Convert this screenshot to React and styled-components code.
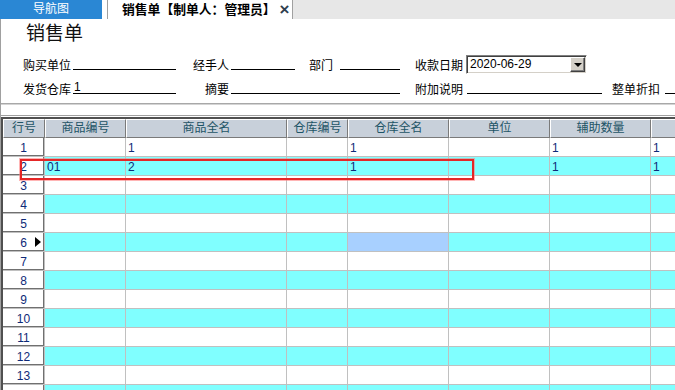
import React from "react";
import styled, { createGlobalStyle } from "styled-components";

const COLUMNS = [
  { title: "行号", width: 42 },
  { title: "商品编号", width: 81 },
  { title: "商品全名", width: 161 },
  { title: "仓库编号", width: 61 },
  { title: "仓库全名", width: 101 },
  { title: "单位", width: 101 },
  { title: "辅助数量", width: 101 },
  { title: "", width: 100 },
];

const ROWS = [
  ["", "1", "", "1", "", "1", "1"],
  ["01", "2", "", "1", "", "1", "1"],
];

const ROW_COUNT = 14;

function App() {
  const rows = [];
  for (let i = 0; i < ROW_COUNT; i++) {
    rows.push(ROWS[i] || ["", "", "", "", "", "", ""]);
  }

  return (
    <Page>
      <GlobalStyle />
      <TabBar>
        <NavTab>导航图</NavTab>
        <TabGap />
        <ActiveTab>
          销售单【制单人：管理员】
          <Close>×</Close>
        </ActiveTab>
        <TabFill />
      </TabBar>

      <Body>
        <Title>销售单</Title>

        <FormRow>
          <Field>
            <Label $w={50}>购买单位</Label>
            <Line $ml={2} $w={103} />
          </Field>
          <Field $ml={16}>
            <Label $w={37}>经手人</Label>
            <Line $ml={2} $w={64} />
          </Field>
          <Field $ml={14}>
            <Label $w={24}>部门</Label>
            <Line $ml={7} $w={60} />
          </Field>
          <Field $ml={15}>
            <Label $w={48}>收款日期</Label>
            <DateBox>
              2020-06-29
              <DropButton>
                <Caret />
              </DropButton>
            </DateBox>
          </Field>
        </FormRow>

        <FormRow $mt={4}>
          <Field>
            <Label $w={50}>发货仓库</Label>
            <Line $ml={2} $w={103}>1</Line>
          </Field>
          <Field>
            <Label $w={53}>摘要</Label>
            <Line $ml={2} $w={169} />
          </Field>
          <Field $ml={15}>
            <Label $w={48}>附加说明</Label>
            <Line $ml={4} $w={135} />
          </Field>
          <Field $ml={10}>
            <Label $w={48}>整单折扣</Label>
            <Line $ml={5} $w={40} />
          </Field>
        </FormRow>

        <Divider />

        <GridWrap>
          <Grid>
            {COLUMNS.map((col, i) => (
              <HeaderCell key={"h" + i}>{col.title}</HeaderCell>
            ))}
            {rows.map((row, r) => (
              <React.Fragment key={r}>
                <RowNum>
                  {r + 1}
                  {r === 5 && <Pointer />}
                </RowNum>
                {row.map((value, c) => (
                  <Cell
                    key={c}
                    $alt={r % 2 === 1}
                    $selected={r === 5 && c === 3}
                  >
                    {value}
                  </Cell>
                ))}
              </React.Fragment>
            ))}
          </Grid>
          <Highlight />
        </GridWrap>
      </Body>
    </Page>
  );
}

export default App;

const GlobalStyle = createGlobalStyle`
  html, body {
    margin: 0;
    padding: 0;
    background: #fff;
    overflow: hidden;
  }
  body {
    font-family: "Liberation Sans", "Noto Sans CJK SC", sans-serif;
    font-size: 12px;
    color: #000;
  }
`;

const Page = styled.div`
  width: 675px;
  height: 390px;
  overflow: hidden;
  display: flex;
  flex-direction: column;
`;

const TabBar = styled.div`
  display: flex;
  height: 19px;
  flex-shrink: 0;
`;

const NavTab = styled.div`
  width: 102px;
  background: #2a87d4;
  color: #fff;
  font-size: 12px;
  line-height: 19px;
  text-align: center;
`;

const TabGap = styled.div`
  width: 5px;
  background: #fff;
`;

const ActiveTab = styled.div`
  box-sizing: border-box;
  width: 186px;
  border-left: 1px solid #a0a0a0;
  border-right: 1px solid #a0a0a0;
  padding-left: 14px;
  font-size: 12.8px;
  font-weight: bold;
  line-height: 19px;
  white-space: nowrap;
  display: flex;
  align-items: center;
`;

const Close = styled.span`
  margin-left: 4px;
  font-size: 17px;
  font-weight: bold;
  line-height: 17px;
  color: #2f3e4e;
`;

const TabFill = styled.div`
  flex: 1;
  background: #e7e7e7;
`;

const Body = styled.div`
  flex: 1;
  border-left: 1px solid #a0a0a0;
  display: flex;
  flex-direction: column;
  min-height: 0;
`;

const Title = styled.div`
  flex-shrink: 0;
  margin-top: 2px;
  padding-left: 25px;
  height: 26px;
  font-size: 19px;
  line-height: 26px;
  color: #111;
`;

const FormRow = styled.div`
  flex-shrink: 0;
  display: flex;
  align-items: center;
  height: 20px;
  margin-top: ${(p) => p.$mt ?? 7}px;
  padding-left: 20px;
  white-space: nowrap;
`;

const Field = styled.div`
  display: flex;
  align-items: center;
  flex-shrink: 0;
  margin-left: ${(p) => p.$ml || 0}px;
`;

const Label = styled.span`
  width: ${(p) => p.$w}px;
  text-align: right;
  font-size: 12px;
  flex-shrink: 0;
`;

const Line = styled.span`
  box-sizing: border-box;
  width: ${(p) => p.$w}px;
  height: 12px;
  margin-left: ${(p) => p.$ml || 0}px;
  border-bottom: 1px solid #000;
  font-size: 12px;
  line-height: 11px;
  padding-left: 1px;
  flex-shrink: 0;
`;

const DateBox = styled.div`
  box-sizing: border-box;
  position: relative;
  width: 121px;
  height: 19px;
  margin-left: 3px;
  border: 1px solid;
  border-color: #808080 #fff #fff #808080;
  box-shadow: inset 1px 1px 0 #404040, inset -1px -1px 0 #d4d0c8;
  padding-left: 3px;
  font-size: 12px;
  line-height: 17px;
  display: flex;
  align-items: center;
`;

const DropButton = styled.div`
  box-sizing: border-box;
  position: absolute;
  right: 1px;
  top: 1px;
  width: 15px;
  height: 15px;
  background: #d4d0c8;
  border: 1px solid;
  border-color: #fff #404040 #404040 #fff;
  box-shadow: inset -1px -1px 0 #808080;
  display: flex;
  align-items: center;
  justify-content: center;
`;

const Caret = styled.span`
  width: 0;
  height: 0;
  border-left: 4px solid transparent;
  border-right: 4px solid transparent;
  border-top: 4px solid #000;
  margin-top: 1px;
`;

const Divider = styled.div`
  flex-shrink: 0;
  margin-top: 5px;
  height: 1px;
  border-top: 1px solid #a8a8a8;
  background: #d4d4d4;
`;

const GridWrap = styled.div`
  position: relative;
  margin-top: 10px;
  border-top: 1px solid #a0a0a0;
  padding-top: 1px;
  flex-shrink: 0;
`;

const Grid = styled.div`
  display: grid;
  grid-template-columns: ${COLUMNS.map((c) => c.width + "px").join(" ")};
  grid-auto-rows: 19px;
  border-top: 2px solid #505050;
  border-left: 2px solid #505050;
  width: max-content;
`;

const HeaderCell = styled.div`
  box-sizing: border-box;
  background: #c8d0da;
  border-top: 1px solid #fff;
  border-left: 1px solid #fff;
  border-right: 1px solid #7a7a7a;
  border-bottom: 1px solid #7a7a7a;
  color: #1d5466;
  font-size: 12px;
  line-height: 17px;
  text-align: center;
  white-space: nowrap;
  overflow: hidden;
`;

const RowNum = styled.div`
  box-sizing: border-box;
  position: relative;
  background: #fff;
  border-right: 1px solid #c0c0c0;
  border-bottom: 1px solid #c0c0c0;
  box-shadow: inset -1px -1px 0 #707070;
  color: #0e2a78;
  font-size: 12px;
  padding-top: 2px;
  line-height: 16px;
  text-align: center;
  overflow: hidden;
`;

const Pointer = styled.span`
  position: absolute;
  right: 3px;
  top: 4px;
  width: 0;
  height: 0;
  border-left: 6px solid #000;
  border-top: 5px solid transparent;
  border-bottom: 5px solid transparent;
`;

const Cell = styled.div`
  box-sizing: border-box;
  background: ${(p) => (p.$selected ? "#a8d0ff" : p.$alt ? "#80ffff" : "#fff")};
  border-right: 1px solid #c0c0c0;
  border-bottom: 1px solid #c0c0c0;
  color: #0e2a78;
  font-size: 12px;
  padding-top: 2px;
  line-height: 16px;
  padding-left: 2px;
  white-space: nowrap;
  overflow: hidden;
`;

const Highlight = styled.div`
  position: absolute;
  left: 19px;
  top: 43px;
  width: 454px;
  height: 21px;
  box-sizing: border-box;
  border: 2px solid #e52626;
  box-shadow: 0 0 0 1px rgba(255, 120, 120, 0.55);
  pointer-events: none;
`;
